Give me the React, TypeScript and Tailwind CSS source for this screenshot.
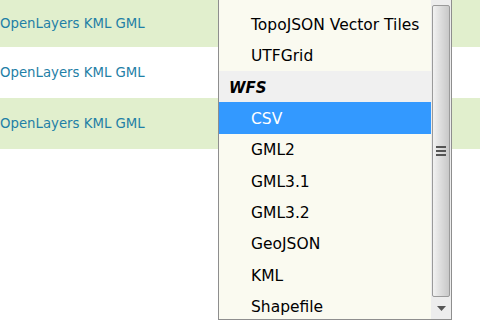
const rows = [
  { h: 'h-[47px]', green: true, text: true },
  { h: 'h-[51px]', green: false, text: true },
  { h: 'h-[51px]', green: true, text: true },
  { h: 'h-[172px]', green: false, text: false },
];

const items: { label: string; kind?: 'group' | 'selected' }[] = [
  { label: 'TopoJSON Vector Tiles' },
  { label: 'UTFGrid' },
  { label: 'WFS', kind: 'group' },
  { label: 'CSV', kind: 'selected' },
  { label: 'GML2' },
  { label: 'GML3.1' },
  { label: 'GML3.2' },
  { label: 'GeoJSON' },
  { label: 'KML' },
  { label: 'Shapefile' },
];

function Scrollbar() {
  return (
    <div className="flex w-[20px] flex-col bg-[#ededed] pt-[5px]">
      <div className="relative mx-[1px] flex flex-1 items-center justify-center rounded-[2px] border border-[#9a9a9a] bg-gradient-to-r from-[#f2f2f2] via-[#dcdcdc] to-[#c8c8c8]">
        <div className="flex flex-col gap-[2px]">
          <div className="h-[2px] w-[10px] bg-[#555]" />
          <div className="h-[2px] w-[10px] bg-[#555]" />
          <div className="h-[2px] w-[10px] bg-[#555]" />
        </div>
      </div>
      <div className="flex h-[22px] items-center justify-center">
        <svg width="9" height="5" viewBox="0 0 9 5">
          <path d="M0 0h9L4.5 5z" fill="#555" />
        </svg>
      </div>
    </div>
  );
}

export default function App() {
  return (
    <div
      className="relative h-[321px] w-[480px] overflow-hidden bg-white"
      style={{ fontFamily: '"DejaVu Sans", Verdana, sans-serif' }}
    >
      {rows.map((r, i) => (
        <div
          key={i}
          className={`flex ${r.h} items-center text-[13.3px] ${r.green ? 'bg-[#e1efcd]' : 'bg-white'}`}
        >
          {r.text && <span className="text-[#1f80a6]">OpenLayers KML GML</span>}
        </div>
      ))}

      <div className="absolute left-[218px] top-0 flex h-[320px] w-[234px] border border-t-0 border-[#8e8e8e] bg-[#fafaf0] text-[15.5px]">
        <div className="flex flex-1 flex-col pt-[8px]">
          {items.map((it) => (
            <div
              key={it.label}
              className={`flex h-[31.4px] shrink-0 items-center pt-[3px] ${
                it.kind === 'group'
                  ? 'bg-[#f0f0f0] pl-[10px] text-[15px] font-bold italic text-black'
                  : it.kind === 'selected'
                    ? 'bg-[#3399ff] pl-[32px] text-white'
                    : 'pl-[32px] text-black'
              }`}
            >
              {it.label}
            </div>
          ))}
        </div>
        <Scrollbar />
      </div>
    </div>
  );
}
